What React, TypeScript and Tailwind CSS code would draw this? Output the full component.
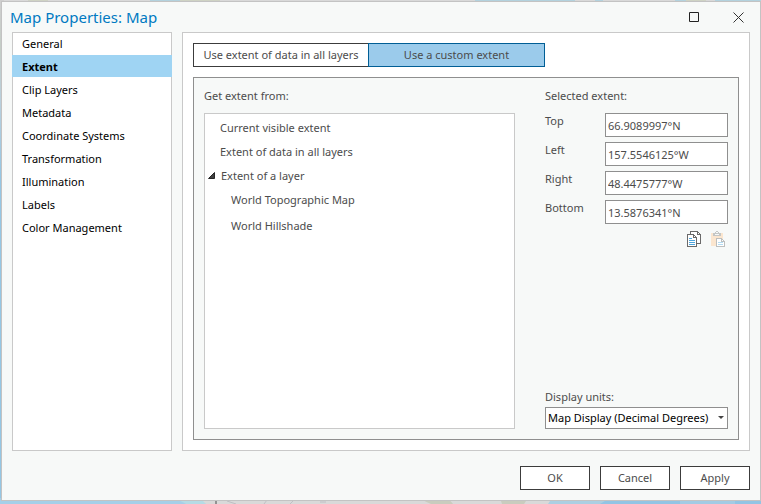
import { useState, type ReactNode } from 'react';

const SECTIONS = [
  'General',
  'Extent',
  'Clip Layers',
  'Metadata',
  'Coordinate Systems',
  'Transformation',
  'Illumination',
  'Labels',
  'Color Management',
];

const EXTENT = [
  { id: 'top', label: 'Top', value: '66.9089997°N' },
  { id: 'left', label: 'Left', value: '157.5546125°W' },
  { id: 'right', label: 'Right', value: '48.4475777°W' },
  { id: 'bottom', label: 'Bottom', value: '13.5876341°N' },
];

// Map view that shows around the dialog's edges
function MapBackdrop() {
  return (
    <svg
      viewBox="0 0 761 504"
      preserveAspectRatio="none"
      className="absolute inset-0 -z-10 h-full w-full"
      aria-hidden="true"
    >
      <defs>
        <linearGradient id="coast" x1="0" y1="0" x2="0" y2="1">
          <stop offset="0" stopColor="#cfcfcf" />
          <stop offset=".1" stopColor="#c3cdc6" />
          <stop offset=".2" stopColor="#b9cfdc" />
          <stop offset=".35" stopColor="#95c6e3" />
        </linearGradient>
      </defs>
      <path d="M0 0h761v504H0z" fill="#d9d9d9" />
      <path d="M0 0h4v504H0z" fill="url(#coast)" />
      <path d="M150 0h30v4h-30zM475 0h100v4H475zM595 0h8v4h-8zM675 0h12v4h-12zM715 0h46v4h-46z" fill="#b3d2de" />
      <path d="M28 0h20v4H28zM180 0h40v4h-40zM686 0h20v4h-20z" fill="#cfd3c4" />
      <path d="M0 498h180l26 6H0z" fill="#a5cfe8" />
      <path d="M175 498h25l6 6h-20z" fill="#b5dbe5" />
      <path d="M215 498h2v6h-2z" fill="#929292" />
      <path d="M227 501l9 3M264 504l3-4M290 504l4-4M320 502h6" stroke="#bfbfc4" />
      <path d="M418 498h30l5 6h-22zM500 498h28l-4 6h-22z" fill="#c9ccbe" />
      <path d="M552 498h209v6H548z" fill="#accfe2" />
      <path d="M610 498h151v6H600z" fill="#92c4e4" />
      <path d="M680 498h55v6h-55z" fill="#a3cbe4" />
    </svg>
  );
}

function CopyIcon() {
  return (
    <svg width="16" height="16" viewBox="0 0 16 16" shapeRendering="crispEdges" aria-hidden="true">
      <path d="M3.5 .5h7l3 3v9h-10z" fill="#fff" stroke="#6a6a6a" />
      <path d="M10.5 .5v3h3" fill="none" stroke="#6a6a6a" />
      <path d="M.5 3.5h6l3 3v9h-9z" fill="#fff" stroke="#6a6a6a" />
      <path d="M6.5 3.5v3h3" fill="none" stroke="#6a6a6a" />
      <path d="M2 7.5h3M2 9.5h6M2 11.5h6M2 13.5h6" stroke="#4ea6dc" />
    </svg>
  );
}

function PasteIcon() {
  return (
    <svg width="16" height="16" viewBox="0 0 16 16" shapeRendering="crispEdges" aria-hidden="true">
      <path d="M0 2h12v13H0z" fill="#fbe6cf" />
      <path d="M2 2h2V1h1V0h2v1h1v1h2v3H2z" fill="#c4c6c5" />
      <path d="M5 1h2v1H5zM4 3h4v1H4z" fill="#f7f9f8" />
      <path d="M5.5 7.5h5l3 3v5h-8z" fill="#fff" stroke="#bdbfbe" />
      <path d="M10.5 7.5v3h3" fill="none" stroke="#bdbfbe" />
      <path d="M7 11.5h5M7 13.5h5" stroke="#b5dcf2" />
    </svg>
  );
}

function DialogButton({ children }: { children: ReactNode }) {
  return (
    <button type="button" className="h-6 w-[70px] border border-[#3c3c3c] bg-white text-center">
      {children}
    </button>
  );
}

export default function App() {
  const [section, setSection] = useState('Extent');
  const [custom, setCustom] = useState(true);

  return (
    <div className="relative isolate flex min-h-screen pt-px pb-[3px] pl-px font-['Noto_Sans','Open_Sans',sans-serif] text-[11px] leading-4 text-[#4c4c4c]">
      <MapBackdrop />
      <div role="dialog" aria-labelledby="title" className="flex flex-1 flex-col border border-[#c3c3c3] bg-[#f7f9f8] pb-[10px]">
        <header className="flex h-[30px] items-center pr-4 pl-2">
          <h1 id="title" className="flex-1 text-[15px] text-[#007ac2]">Map Properties: Map</h1>
          <button type="button" aria-label="Maximize" className="mr-[34px]">
            <svg width="10" height="10" viewBox="0 0 10 10"><path d="M.5 .5h9v9h-9z" fill="none" stroke="#222" /></svg>
          </button>
          <button type="button" aria-label="Close">
            <svg width="11" height="11" viewBox="0 0 11 11"><path d="M.5 .5l10 10M10.5 .5l-10 10" stroke="#333" /></svg>
          </button>
        </header>

        <div className="flex flex-1 gap-[10px] px-[10px]">
          <nav className="w-40 shrink-0 border border-[#c9c9c9] bg-white text-black">
            <div className="-mx-px -mt-px flex flex-col gap-px">
              {SECTIONS.map(name => (
                <button
                  key={name}
                  type="button"
                  onClick={() => setSection(name)}
                  className={
                    name === section
                      ? 'flex h-[22px] items-center bg-[#9fd4f3] px-[10px] pt-[2px] font-bold'
                      : 'flex h-[22px] items-center px-[10px] pt-[2px]'
                  }
                >
                  {name}
                </button>
              ))}
            </div>
          </nav>

          <main className="flex flex-1 flex-col gap-[10px] border border-[#c9c9c9] bg-white p-[10px]">
            <div className="flex">
              <button
                type="button"
                onClick={() => setCustom(false)}
                className={
                  custom
                    ? 'h-6 w-[175px] border border-r-0 border-[#3c3c3c] bg-white whitespace-nowrap'
                    : 'h-6 w-[175px] border border-[#005e95] bg-[#9bcbeb] whitespace-nowrap'
                }
              >
                Use extent of data in all layers
              </button>
              <button
                type="button"
                onClick={() => setCustom(true)}
                className={
                  custom
                    ? 'h-6 w-[177px] border border-[#005e95] bg-[#9bcbeb]'
                    : 'h-6 w-[177px] border border-l-0 border-[#3c3c3c] bg-white'
                }
              >
                Use a custom extent
              </button>
            </div>

            <div className="flex flex-1 gap-[30px] border border-[#8f8f8f] bg-[#f7f9f8] p-[10px]">
              <section className="flex flex-1 flex-col gap-[9px]">
                <h2>Get extent from:</h2>
                <ul className="flex-1 border border-[#c9c9c9] bg-white pt-[2px] leading-6">
                  <li className="pl-[15px]">Current visible extent</li>
                  <li className="pl-[15px]">Extent of data in all layers</li>
                  <li>
                    <div className="flex h-[23px] items-center gap-[6px] pl-[3px]">
                      <svg width="7" height="7" viewBox="0 0 7 7" aria-hidden="true"><path d="M6.5 .5v6h-6z" fill="#404040" stroke="#262626" /></svg>
                      Extent of a layer
                    </div>
                    <ul className="pl-[26px] leading-[26px]">
                      <li>World Topographic Map</li>
                      <li>World Hillshade</li>
                    </ul>
                  </li>
                </ul>
              </section>

              <section className="flex w-[183px] shrink-0 flex-col">
                <h2 className="mb-[9px]">Selected extent:</h2>
                <div className="flex flex-col gap-[5px]">
                  {EXTENT.map(f => (
                    <div key={f.id} className="flex">
                      <label htmlFor={f.id} className="w-[60px]">{f.label}</label>
                      <input id={f.id} defaultValue={f.value} className="h-6 w-0 flex-1 border border-[#8f8f8f] bg-white px-[2px]" />
                    </div>
                  ))}
                </div>
                <div className="mt-[7px] flex justify-end gap-2 pr-px">
                  <button type="button" aria-label="Copy extent"><CopyIcon /></button>
                  <button type="button" aria-label="Paste extent" disabled><PasteIcon /></button>
                </div>
                <label htmlFor="units" className="mt-auto mb-[2px]">Display units:</label>
                <div className="relative">
                  <select id="units" className="block h-[22px] w-full appearance-none border border-[#8f8f8f] bg-white pl-[2px] text-black">
                    <option>Map Display (Decimal Degrees)</option>
                  </select>
                  <svg width="6" height="3" viewBox="0 0 6 3" className="pointer-events-none absolute top-[9px] right-1" aria-hidden="true"><path d="M0 0h6L3 3z" fill="#444" /></svg>
                </div>
              </section>
            </div>
          </main>
        </div>

        <footer className="mt-[15px] flex justify-end gap-[10px] px-[10px]">
          <DialogButton>OK</DialogButton>
          <DialogButton>Cancel</DialogButton>
          <DialogButton>Apply</DialogButton>
        </footer>
      </div>
    </div>
  );
}
